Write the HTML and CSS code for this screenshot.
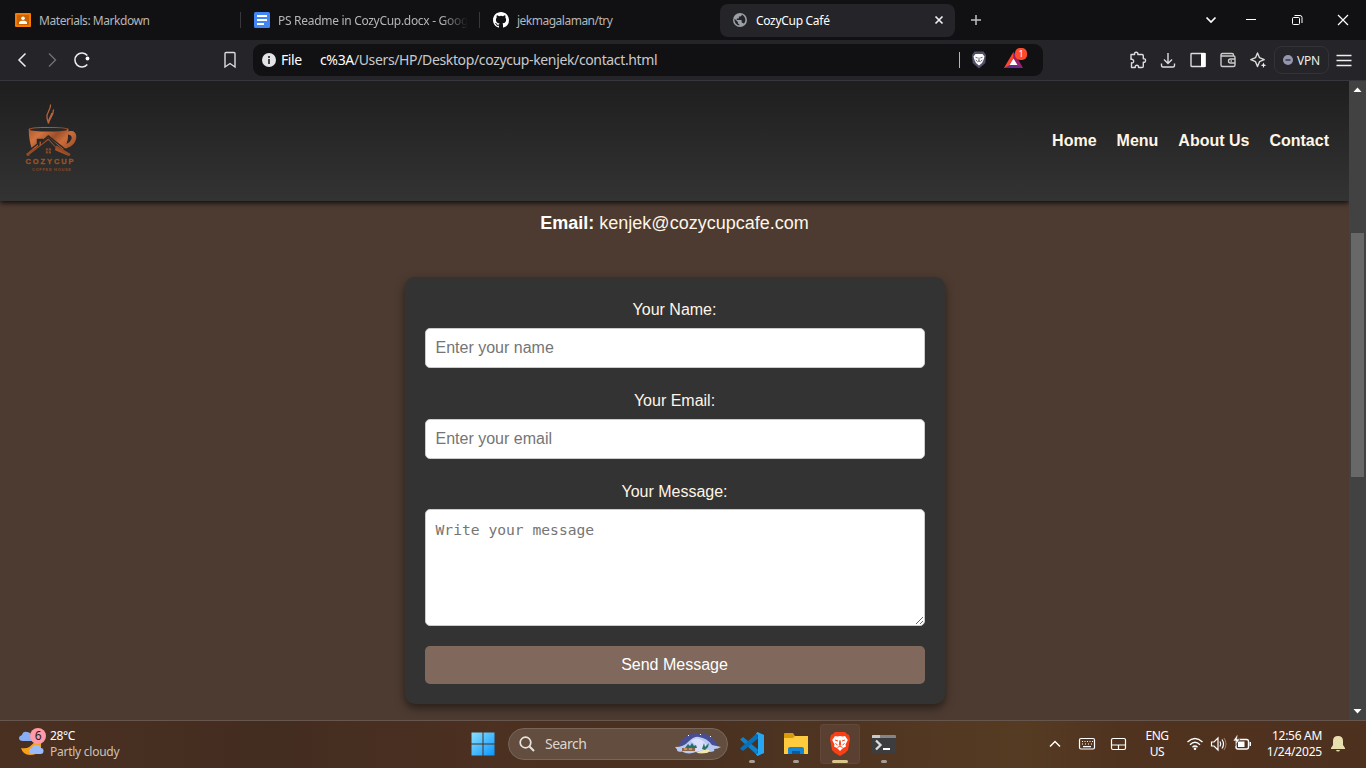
FILE: index.html
```html
<!DOCTYPE html>
<html lang="en">
<head>
<meta charset="utf-8">
<title>CozyCup Café</title>
<link rel="stylesheet" href="styles.css">
</head>
<body>
<div class="screen">
  <div class="tabs">
    <div class="tab tab-one">
      <svg width="16" height="14" viewBox="0 0 16 14"><rect width="16" height="14" rx="1" fill="#f57c00"/><rect x="2" y="2" width="12" height="10" fill="#c96300"/><circle cx="8" cy="5.3" r="1.8" fill="#fff"/><path d="M4 11V9.8C4 8.4 6 7.8 8 7.8s4 .6 4 2V11z" fill="#fff"/></svg>
      <span class="t1">Materials: Markdown</span>
    </div>
    <div class="tab tab-two">
      <svg width="16" height="16" viewBox="0 0 16 16"><rect width="16" height="16" rx="1.5" fill="#4285f4"/><path d="M3 4h10M3 8h10M3 12h7" stroke="#fff" stroke-width="2"/></svg>
      <span class="fade t2">PS Readme in CozyCup.docx - Goog</span>
    </div>
    <div class="tab tab-three">
      <svg width="16" height="16" viewBox="0 0 16 16"><path fill="#fff" d="M8 0C3.58 0 0 3.58 0 8c0 3.54 2.29 6.53 5.47 7.59.4.07.55-.17.55-.38 0-.19-.01-.82-.01-1.49-2.01.37-2.53-.49-2.69-.94-.09-.23-.48-.94-.82-1.13-.28-.15-.68-.52-.01-.53.63-.01 1.08.58 1.23.82.72 1.21 1.87.87 2.33.66.07-.52.28-.87.51-1.07-1.78-.2-3.64-.89-3.64-3.95 0-.87.31-1.59.82-2.15-.08-.2-.36-1.02.08-2.12 0 0 .67-.21 2.2.82a7.5 7.5 0 0 1 4 0c1.53-1.04 2.2-.82 2.2-.82.44 1.1.16 1.92.08 2.12.51.56.82 1.27.82 2.15 0 3.07-1.87 3.75-3.65 3.95.29.25.54.73.54 1.48 0 1.07-.01 1.93-.01 2.2 0 .21.15.46.55.38A8 8 0 0 0 16 8c0-4.42-3.58-8-8-8z"/></svg>
      <span class="t3">jekmagalaman/try</span>
    </div>
    <div class="tab tab-active">
      <svg width="14" height="14" viewBox="0 0 14 14"><circle cx="7" cy="7" r="7" fill="#9aa0a6"/><path d="M8.7 1.6v.5c0 .8-.6 1.4-1.4 1.4H5.9v1.4c0 .4-.3.7-.7.7H3.8V7H8c.4 0 .7.3.7.7v2.1h.7c.6 0 1.1.4 1.3 1A5.6 5.6 0 0 0 8.700 1.600zM6.300 12.500v-1.300c-.8 0-1.400-.6-1.400-1.400v-.7L1.600 5.800a5.600 5.600 0 0 0 4.700 6.700z" fill="#242429"/></svg>
      <span class="t4">CozyCup Café</span>
      <svg class="tab-x" width="10" height="10" viewBox="0 0 10 10"><path d="M1.500 1.500l7 7m0-7l-7 7" stroke="#eee" stroke-width="1.700"/></svg>
    </div>
    <svg class="plus" width="12" height="12" viewBox="0 0 12 12"><path d="M1 6h10M6 1v10" stroke="#c0c0c4" stroke-width="1.500"/></svg>
    <div class="window-buttons">
      <svg class="tab-search" width="46" height="40" viewBox="0 0 46 40"><path d="M18.500 17.500l4.500 4.500 4.500-4.500" fill="none" stroke="#fff" stroke-width="1.700"/></svg>
      <svg width="46" height="40" viewBox="0 0 46 40"><path d="M18 19.500h10" stroke="#fff"/></svg>
      <svg width="46" height="40" viewBox="0 0 46 40"><rect x="18.500" y="17.500" width="7" height="7" rx="1" fill="none" stroke="#fff"/><path d="M20.500 15.500h5.500q2 0 2 2v5.500" fill="none" stroke="#fff"/></svg>
      <svg width="46" height="40" viewBox="0 0 46 40"><path d="M18 15l10 10m0-10L18 25" stroke="#fff" stroke-width="1.200"/></svg>
    </div>
  </div>

  <div class="toolbar">
    <svg class="tool" viewBox="0 0 30 30"><path d="M18.500 8.500L12 15l6.500 6.500" fill="none" stroke="#eee" stroke-width="1.500"/></svg>
    <svg class="tool" viewBox="0 0 30 30"><path d="M12 8.500l6.500 6.500-6.500 6.500" fill="none" stroke="#707075" stroke-width="1.400"/></svg>
    <svg class="tool" viewBox="0 0 30 30"><path d="M20.300 10.500A7 7 0 1 0 20.300 19.500" fill="none" stroke="#eee" stroke-width="1.500"/><circle cx="20.500" cy="13.500" r="1.900" fill="#fff"/></svg>
    <svg class="tool bookmark" viewBox="0 0 30 30"><path d="M10 8.500q0-1 1-1h8q1 0 1 1v13.500l-5-3.500-5 3.500z" fill="none" stroke="#ddd" stroke-width="1.400"/></svg>
    <div class="address">
      <svg width="14" height="14" viewBox="0 0 14 14"><circle cx="7" cy="7" r="7" fill="#e4e4e8"/><path d="M7 6v5M7 3v2" stroke="#444" stroke-width="2"/></svg>
      <span class="scheme">File</span>
      <span class="url">c%3A<i>/Users/HP/Desktop/cozycup-kenjek/contact.html</i></span>
      <span class="address-line"></span>
      <svg class="shield" width="16" height="18" viewBox="0 0 16 18"><path d="M3.500.500h9L15 4l-.700 8L8 17.500 1.700 12 1 4z" fill="#515169"/><path d="M4.500 3h7L13.500 5.500 12.500 9l-1.500 3-3 2.500L5 12 3.500 9l-1-3.500z" fill="#fff"/><path d="M4.500 6.300l2.200.7M11.500 6.300l-2.200.7M8 6.500v3.500M6.300 10.800L8 10l1.700.8M4.700 9l1.300 1M11.300 9L10 10" stroke="#515169" stroke-width=".9" fill="none"/></svg>
      <span class="bat">
        <svg width="19" height="17" viewBox="0 0 19 17"><path d="M9.500 0L0 16h19z" fill="#662d91"/><path d="M9.500 0v6L5 13.500 0 16z" fill="#ff4724"/><path d="M9.500 0l9.500 16-5-2.500L9.500 6z" fill="#9e1f63"/><path d="M9.500 6.500L5.500 13h8z" fill="#fff"/></svg>
        <b>1</b>
      </span>
    </div>
    <div class="tools-right">
      <svg class="tool" viewBox="0 0 30 30"><path d="M8 9.500h3.600c-.9-3 4-3 3.200 0H19q1.300 0 1.300 1.300v3c3-.8 3 4.200 0 3.400v4q0 1.300-1.300 1.300h-3.500c.8-3-4-3-3.200 0H8.500V17.800c3 .8 3-4.200-.500-3.400z" fill="none" stroke="#ddd" stroke-width="1.400" stroke-linejoin="round"/></svg>
      <svg class="tool" viewBox="0 0 30 30"><path d="M15 8v10M11 14.500l4 4 4-4M8.500 18.500v2q0 1.500 1.500 1.500h10q1.500 0 1.500-1.500v-2" fill="none" stroke="#ddd" stroke-width="1.400"/></svg>
      <svg class="tool" viewBox="0 0 30 30"><rect x="8" y="8.500" width="14" height="13" rx=".7" fill="none" stroke="#ddd" stroke-width="1.400"/><path d="M18 8h4.600v14H18z" fill="#fff"/></svg>
      <svg class="tool" viewBox="0 0 30 30"><path d="M8 10V20q0 1.500 1.500 1.500h11Q22 21.500 22 20V12.500q0-1.500-1.500-1.500H9.500Q8 11 8 9.800T9.500 8.500H19q1.500 0 1.500 1.500v1M22 14h-4.500q-2 0-2 2t2 2H22M17.500 16h1.500" fill="none" stroke="#ccc" stroke-width="1.400"/></svg>
      <svg class="tool" viewBox="0 0 30 30"><path d="M14.500 8l2 4.700 4.700 2-4.700 2-2 4.800-2-4.800-4.700-2 4.700-2z" fill="none" stroke="#ddd" stroke-width="1.400" stroke-linejoin="round"/><path d="M20.500 17.500l.8 2 2 .8-2 .8-.8 2-.8-2-2-.8 2-.8z" fill="#eee"/></svg>
      <span class="vpn"><svg width="10" height="10" viewBox="0 0 10 10"><circle cx="5" cy="5" r="5" fill="#9496ae"/><path d="M2.500 5h5" stroke="#292930" stroke-width="1.300"/></svg>VPN</span>
      <svg class="tool menu" viewBox="0 0 30 30"><path d="M7.500 10.500h15M7.500 15.500h15M7.500 20.500h15" stroke="#eee" stroke-width="1.300"/></svg>
    </div>
  </div>

  <div class="viewport">
    <div class="page">
      <header class="site-header">
        <svg class="logo" width="60" height="72" viewBox="0 0 60 72">
          <defs><linearGradient id="copper" x1="0" x2="1" y1="0" y2=".5"><stop offset="0" stop-color="#a8552d"/><stop offset=".3" stop-color="#d2743f"/><stop offset=".6" stop-color="#9c4f2a"/><stop offset=".8" stop-color="#cc6d3b"/><stop offset="1" stop-color="#b05a2f"/></linearGradient></defs>
          <path d="M30.500 1.500c1 5-4.500 8-3.500 13 .2 2.500 1 4 1.500 6 .5-5 5-7 5-14M32 10c-1 4-4 6-3.500 10" fill="none" stroke="#b9633a" stroke-width="1.300"/>
          <path d="M8.700 26q1.500-2 19.500-2t20.300 2v2.500c4-1.500 7.800.500 7.800 5 0 6-4.500 10-9.300 11.500l-4 1.500L28.300 34 22 39v-2.500h-4V43l-5.500 4.500Q8.700 38 8.700 26z" fill="url(#copper)"/>
          <ellipse cx="28.500" cy="26.700" rx="18.500" ry="1.900" fill="#292929"/>
          <path d="M48 31.500q4.500.5 3.500 4.500-1 3-5 5 2-4.500 1.500-9.500z" fill="#292929"/>
          <path d="M6.500 49.500l11-8.500v-4.500h5v1.500L28.300 33l21 16.500" fill="none" stroke="#292929" stroke-width="1.500"/>
          <path d="M6.500 52l13-9.500v-4h1.500v3l7.300-6 8.700 9.500 13 7-2 .800-14-6-6-8-6.300 5.500L8.500 53z" fill="#a85229"/>
          <path d="M36 43.500l14 8.500" stroke="#934a25" stroke-width="2.500"/>
          <path d="M8 52.500l12.500-9.500 7.800-6 7.200 7.500-1.500 7.500H12z" fill="#2a2a2a"/>
          <path d="M6.800 52l7.700-6.200" stroke="#934a25" stroke-width="2.500"/>
          <path d="M25.800 45.300h5.200v5.200h-5.200z" fill="#8a4524"/><path d="M28.400 45v6M25.500 47.900H31.500" stroke="#2a2a2a" stroke-width=".7"/>
          <text x="5.500" y="61.300" class="logo-name" textLength="48">COZYCUP</text>
          <text x="12" y="67.500" class="logo-sub" textLength="39">COFFEE HOUSE</text>
        </svg>
        <nav class="nav"><a>Home</a><a>Menu</a><a>About Us</a><a>Contact</a></nav>
      </header>
      <main class="content">
        <p class="email"><strong>Email:</strong> kenjek@cozycupcafe.com</p>
        <form class="form">
          <label>Your Name:</label>
          <input class="field" type="text" placeholder="Enter your name">
          <label>Your Email:</label>
          <input class="field" type="text" placeholder="Enter your email">
          <label>Your Message:</label>
          <textarea class="field message" placeholder="Write your message"></textarea>
          <button class="send" type="button">Send Message</button>
        </form>
      </main>
    </div>
    <div class="scrollbar">
      <svg width="17" height="17" viewBox="0 0 17 17"><path d="M4.500 11h8l-4-4.500z" fill="#fff"/></svg>
      <div class="thumb"></div>
      <svg class="down" width="17" height="17" viewBox="0 0 17 17"><path d="M4.500 6h8l-4 4.500z" fill="#fff"/></svg>
    </div>
  </div>

  <div class="taskbar">
    <div class="weather">
      <svg width="28" height="30" viewBox="0 0 28 30"><path d="M3 21q8 2 14-7h6v9q-4 5-11 5T3 21z" fill="#f6a11c"/><path d="M5 14Q1 14 1 11q0-2 3-3 1-4 5-3 3 0 4 3 3 0 3 3t-3 3z" fill="#88aef5"/><path d="M14 27q-3-.500-3-3t3-3q1-4 5-3 3 0 4 3 2.500 0 2.500 3t-3 3z" fill="#9abcfa"/><circle cx="20" cy="9" r="8" fill="#ff9aa8"/><text x="16.700" y="13.200" class="badge-number">6</text></svg>
      <div class="weather-text"><span>28°C</span><span class="dim">Partly cloudy</span></div>
    </div>
    <svg class="start" width="24" height="24" viewBox="0 0 24 24"><defs><linearGradient id="win" x1="0" y1="0" x2="1" y2="1"><stop stop-color="#8be0ff"/><stop offset="1" stop-color="#0896ff"/></linearGradient></defs><path d="M.5.5H11.500V11.500H.5zM12.500.5H23.500V11.500H12.500zM.5 12.500H11.500V23.500H.5zM12.500 12.500H23.500V23.500H12.500z" fill="url(#win)"/></svg>
    <div class="search">
      <svg width="16" height="16" viewBox="0 0 16 16"><circle cx="6.500" cy="6.500" r="5.300" fill="none" stroke="#e8e4e0" stroke-width="1.700"/><path d="M10.500 10.500l4.500 4.500" stroke="#e8e4e0" stroke-width="2"/></svg>
      <span>Search</span>
      <svg class="hill" width="48" height="22" viewBox="0 0 48 22"><path d="M4 13Q11 0 24 0q14 0 20 13z" fill="#494d91"/><path d="M1 14q9 0 13-5Q20 3 25 4q8 1 13 8l9 2q-3 2-7 2 2 3-5 3-9 3-13 0-8 3-14-.500-5 1-5-2z" fill="#b7c9f4"/><path d="M17 8q7-6 15 3 2 4-6 7h-5q3-5-4-10z" fill="#dcdffa"/><path d="M23 20q8-5 13-3l-3 3z" fill="#f5e7ab"/><path d="M11 15l3-4 2 2 2-3 2 3 2-1 1 3zM28 16l2-6 1 4 4-4-1 4-3 3z" fill="#287267"/><path d="M8 15h13v3H8z" fill="#8c664f"/><path d="M10 16h3m2 0h3" stroke="#ffc46d"/><path d="M14 2.500h1M26 1.500h1M36 3.500h1" stroke="#fff"/></svg>
    </div>
    <div class="apps">
      <div class="app"><svg width="24" height="24" viewBox="0 0 24 24"><path d="M0 7.500L3 5l15 12.500-1 5.500z" fill="#0f82cd"/><path d="M0 16.500L3 19 18 6.500 17 1z" fill="#0870b9"/><path d="M17.500 0L24 3v18l-6.500 3L16 22.500 18 21V3l-2-1.500z" fill="#27a7f2"/><path d="M18 2l6 1v18l-6 1z" fill="#27a7f2"/></svg><i></i></div>
      <div class="app"><svg width="24" height="24" viewBox="0 0 24 24"><path d="M0 2q0-1 1-1h8l2 3h12q1 0 1 1v17H0z" fill="#d99a0c"/><path d="M0 6h9l2-2h13v18H0z" fill="#ffcb3e"/><path d="M4 22v-5q0-2 2-2h12q2 0 2 2v5z" fill="#1685d3"/><path d="M8 19h8v3H8z" fill="#075b9f"/></svg><i></i></div>
      <div class="app current"><svg width="20" height="24" viewBox="0 0 20 24"><path d="M5 0h10l2 2 2 1 1 4-2 11-3 3-5 3-5-3-3-3L0 7l1-4 2-1z" fill="#fa3f17"/><path d="M5 4l2.500.5L10 4l2.500.5L15 4l2.800 4-2.300 4.500.5 2-3 1.500-3 3-3-3-3-1.500.5-2L2.200 8z" fill="#fff"/><path d="M5 8l3 1M15 8l-3 1M10 8.500l-.7 4.500.7.5.7-.5L10 8.500M7.500 15.500L10 14l2.500 1.500M5.500 11.500l2 1.500M14.500 11.500l-2 1.500" fill="none" stroke="#fa3f17" stroke-width="1"/></svg><i></i></div>
      <div class="app"><svg width="24" height="24" viewBox="0 0 24 24"><rect y="3" width="24" height="18" rx="1" fill="#3d3d3f"/><path d="M0 6V4q0-1 1-1h22q1 0 1 1v2z" fill="#858585"/><path d="M0 6V4q0-1 1-1h7v3z" fill="#c9c9c9"/><path d="M4 8.500l4.500 4.500L4 17.500" fill="none" stroke="#ddd" stroke-width="2.300"/><path d="M11 17h7" stroke="#fff" stroke-width="2"/></svg><i></i></div>
    </div>
    <div class="tray">
      <svg width="32" height="24" viewBox="0 0 32 24"><path d="M11 14.500l5-5 5 5" fill="none" stroke="#fff" stroke-width="1.500"/></svg>
      <svg width="32" height="24" viewBox="0 0 32 24"><rect x="8.500" y="6.500" width="15" height="10.500" rx="1.500" fill="none" stroke="#fff" stroke-width="1.200"/><path d="M11 9.500h1m1.500 0h1m1.500 0h1m1.500 0h1m1.500 0h1M11 12h1m2 0h1m2 0h1m2 0h1M12 14.700h8" stroke="#fff" stroke-width="1.200"/></svg>
      <svg width="32" height="24" viewBox="0 0 32 24"><rect x="8.500" y="6.500" width="14" height="11" rx="1.500" fill="none" stroke="#fff" stroke-width="1.200"/><path d="M8.500 13h14M15.500 13v4.500" stroke="#fff" stroke-width="1.200"/></svg>
      <div class="language"><span>ENG</span><span>US</span></div>
      <svg class="status" width="74" height="24" viewBox="0 0 74 24"><path d="M2.500 10q7.500-7 15 0M5 12.700q5-4.700 10 0M7.500 15.300q2.500-2.500 5 0" fill="none" stroke="#fff" stroke-width="1.400"/><circle cx="10" cy="16.800" r="1.300" fill="#fff"/><path d="M26.500 10h2.500l4-4v12l-4-4h-2.500zM35 9.500q1.500 2.500 0 5M37 7.500q3 4.500 0 9" fill="none" stroke="#fff" stroke-width="1.200"/><path d="M39 6q4 6 0 12" fill="none" stroke="#9a8470"/><rect x="51" y="7.500" width="12.500" height="9.500" rx="2" fill="none" stroke="#fff" stroke-width="1.400"/><path d="M53 9.500h6.500v5.500H53zM64.500 10h1.500v4h-1.500z" fill="#fff"/><path d="M52 3l-4 6h3l-1 5 5-7h-3l1-4z" fill="#fff" stroke="#50321f" stroke-width=".6"/></svg>
      <div class="clock"><span class="time">12:56 AM</span><span class="date">1/24/2025</span></div>
      <svg class="bell" width="14" height="16" viewBox="0 0 14 16"><path d="M7 0q5 0 5 5v4l2 3v1H0v-1l2-3V5q0-5 5-5zM5 14h4q-.500 1.500-2 1.500T5 14z" fill="#e8dfae"/></svg>
    </div>
  </div>
</div>
</body>
</html>
```
FILE: styles.css
```css
* { box-sizing: border-box; }
body { margin: 0; overflow: hidden; background: #111113; font-family: "Noto Sans", sans-serif; }
svg { display: block; flex: none; }
.screen { width: 1366px; height: 768px; display: flex; flex-direction: column; }

.tabs { height: 40px; flex: none; display: flex; align-items: center; background: #111113; font-size: 12px; color: #b6b6ba; white-space: nowrap; }
.tab { width: 240px; height: 16px; display: flex; align-items: center; gap: 8px; border-right: 1px solid #38383c; flex: none; }
.tab-one { width: 241px; padding-left: 15px; }
.tab-two { width: 239px; padding-left: 13px; }
.tab-three { padding-left: 13px; border: 0; }
.tab-active { width: 235px; height: 33px; padding: 0 11px 0 13px; gap: 9px; border: 0; border-radius: 8px; background: #242429; color: #fff; }
.tab-x { margin-left: auto; }
.t1 { letter-spacing: -.44px; }
.t2 { letter-spacing: -.3px; }
.t3 { letter-spacing: -.5px; }
.t4 { letter-spacing: -.3px; }
.fade { width: 190px; overflow: hidden; mask-image: linear-gradient(90deg, #000 86%, transparent); }
.plus { margin-left: 15px; }
.window-buttons { display: flex; margin-left: auto; }
.tab-search { margin-right: -6px; }

.toolbar { height: 41px; flex: none; display: flex; align-items: center; padding: 0 7px; background: #242429; border-bottom: 1px solid #36363b; }
.tool { width: 30px; height: 30px; }
.bookmark { margin-left: 118px; }
.address { width: 790px; height: 32px; margin-left: 8px; padding-left: 9px; display: flex; align-items: center; border-radius: 9px; background: #111113; font-size: 14px; line-height: 18px; color: #fff; white-space: nowrap; }
.scheme { width: 39px; margin: -1px 0 0 5px; letter-spacing: -.4px; }
.url { width: 639px; margin-top: -1px; letter-spacing: -.36px; }
.url i { font-style: normal; color: #c9c9cd; }
.address-line { width: 1px; height: 16px; background: #b4b4b8; }
.shield { margin-left: 11px; }
.bat { position: relative; margin-left: 17px; }
.bat b { position: absolute; left: 11px; top: -4px; width: 12px; height: 12px; border-radius: 5px; background: #ff4b2b; font-size: 9px; line-height: 12px; font-weight: 400; text-align: center; }
.tools-right { display: flex; align-items: center; margin-left: auto; }
.menu { margin-left: -1px; }
.vpn { width: 55px; height: 28px; margin: 0 1px; display: flex; align-items: center; justify-content: center; gap: 4px; border: 1px solid #323238; border-radius: 8px; color: #eee; font-size: 12px; letter-spacing: -.2px; }

.viewport { height: 639px; flex: none; display: flex; background: #4d3b31; }
.page { width: 1349px; height: 639px; font-family: "Liberation Sans", Arial, sans-serif; overflow: hidden; }
.site-header { height: 120px; display: flex; align-items: center; justify-content: space-between; padding: 0 20px; background: linear-gradient(#1e1e1e, #333); box-shadow: 0 2px 5px rgba(0, 0, 0, .8); }
.logo { margin-top: -4px; }
.logo-name { font: bold 7.5px "Liberation Sans", sans-serif; fill: #9a5426; stroke: #9a5426; stroke-width: .3px; }
.logo-sub { font: bold 4px "Liberation Sans", sans-serif; fill: #8a4a22; }
.nav { display: flex; gap: 20px; color: #fff5e6; font-size: 16px; font-weight: bold; line-height: 18px; }
.content { color: #fff5e6; display: flex; flex-direction: column; align-items: center; }
.email { margin: 12px 0 43px; font-size: 18px; line-height: 21px; }
.email strong { color: #fff; }
.form { width: 540px; height: 427px; padding: 24px 20px 20px; display: flex; flex-direction: column; border-radius: 10px; background: #333; box-shadow: 0 4px 10px rgba(0, 0, 0, .5); }
.form label { height: 18px; line-height: 18px; margin-bottom: 9px; text-align: center; font-size: 16px; }
.field { height: 40px; margin: 0 0 24px; padding: 10px; border: 1px solid #ccc; border-radius: 5px; background: #fff; font: 16px/18px "Liberation Sans", sans-serif; outline: 0; }
.field::placeholder { color: #757575; }
.form .message { height: 117px; flex: none; margin: -1px 0 20px; resize: vertical; font: 14.65px/20px "DejaVu Sans Mono", monospace; }
.send { height: 38px; padding: 0; border: 0; border-radius: 5px; background: #80695c; color: #fff; font: 16px "Liberation Sans", sans-serif; }
.scrollbar { width: 17px; display: flex; flex-direction: column; align-items: center; background: #424242; }
.thumb { width: 13px; height: 244px; margin-top: 135px; background: #686868; }
.down { margin-top: auto; }

.taskbar { height: 48px; flex: none; display: flex; align-items: center; padding-bottom: 1px; border-top: 1px solid #66564d; background: linear-gradient(90deg, #4a3021 0%, #432d20 20%, #4c3021 36%, #49301f 50%, #563b23 75%, #50331f 82%, #4e301e 100%); color: #fff; font-size: 12px; line-height: 16px; white-space: nowrap; }
.weather { width: 472px; padding-left: 18px; display: flex; align-items: center; gap: 4px; }
.weather svg { margin-top: -5px; }
.weather-text { display: flex; flex-direction: column; letter-spacing: -.35px; }
.dim { color: #cec2ba; letter-spacing: -.26px; }
.badge-number { font: 12px "Noto Sans", sans-serif; fill: #222; }
.start { margin-left: -1px; }
.search { width: 220px; height: 32px; margin-left: 13px; padding: 0 5px 0 10px; display: flex; align-items: center; gap: 10px; border: 1px solid #78665a; border-radius: 16px; background: #624d3e; color: #ded5cf; font-size: 14px; letter-spacing: -.5px; }
.hill { margin-left: auto; }
.apps { display: flex; gap: 4px; margin-left: 4px; }
.app { width: 40px; height: 40px; padding-top: 8px; display: flex; flex-direction: column; align-items: center; border-radius: 4px; }
.app i { width: 6px; height: 3px; margin-top: 4px; border-radius: 2px; background: #a79d96; }
.current { background: #5a4030; box-shadow: inset 0 0 0 1px #624838; }
.current i { width: 16px; background: #d9c58c; }
.tray { display: flex; align-items: center; margin-left: auto; padding-right: 21px; }
.language { width: 44px; display: flex; flex-direction: column; align-items: center; letter-spacing: -.5px; }
.status { margin-left: 6px; }
.clock { width: 64px; padding-right: 1px; display: flex; flex-direction: column; align-items: flex-end; }
.time { letter-spacing: -.3px; }
.date { letter-spacing: -.2px; }
.bell { margin-left: 8px; }
```
